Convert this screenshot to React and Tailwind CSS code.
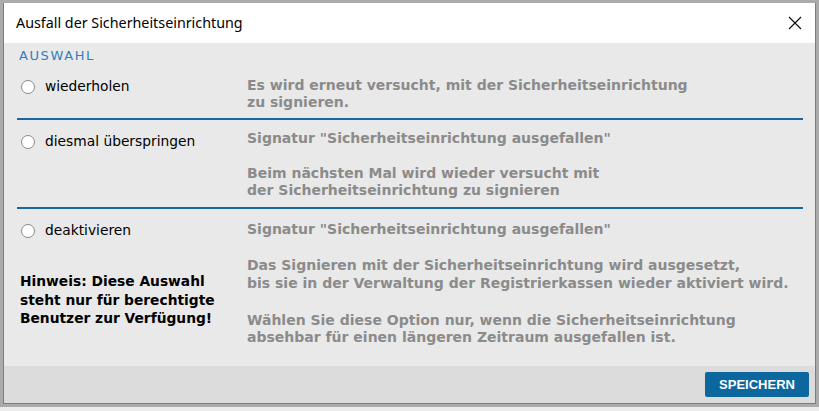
import React from "react";

const body = "text-[14px] leading-[17px] font-bold font-['DejaVu_Sans'] text-[#8b8b8b]";

function Radio() {
  return (
    <span className="inline-block w-[14px] h-[14px] rounded-full border border-[#8a8a8a] bg-white shrink-0" />
  );
}

function Label({ children, offset = "mt-[1px]" }) {
  return (
    <div className={`flex items-center gap-[10px] pl-[4px] h-[17px] ${offset}`}>
      <Radio />
      <span className="text-[13.8px] leading-[17px] text-black font-['DejaVu_Sans']">{children}</span>
    </div>
  );
}

export default function App() {
  return (
    <div className="w-[819px] h-[411px] bg-[#ececec] font-['DejaVu_Sans']">
      <div className="w-[819px] h-[407px] border-[3px] border-[#ababab]">
        <div className="w-full h-full border border-[#7c7c7c] border-t-0 flex flex-col bg-[#e9e9e9]">
          {/* Title bar */}
          <div className="h-[40px] bg-white flex items-center justify-between pl-[12px] pr-[10px] shrink-0">
            <span className="text-[14.3px] text-black font-['Noto_Sans']">
              Ausfall der Sicherheitseinrichtung
            </span>
            <svg width="14" height="14" viewBox="0 0 14 14" className="mr-[3px]">
              <path d="M1 1 L13 13 M13 1 L1 13" stroke="#111" strokeWidth="1.2" fill="none" />
            </svg>
          </div>

          {/* Body */}
          <div className="flex-1 pt-[4px] pl-[13px] pr-[12px]">
            <div className="text-[13px] leading-[17px] text-[#2f7fbe] tracking-[1.6px] pl-[2px]">AUSWAHL</div>

            {/* Section 1 */}
            <div className="flex pt-[13px] pb-[7px] border-b-2 border-[#1568a0]">
              <div className="w-[230px] shrink-0">
                <Label>wiederholen</Label>
              </div>
              <div className={body}>
                Es wird erneut versucht, mit der Sicherheitseinrichtung
                <br />
                zu signieren.
              </div>
            </div>

            {/* Section 2 */}
            <div className="flex pt-[10px] pb-[8px] border-b-2 border-[#1568a0]">
              <div className="w-[230px] shrink-0">
                <Label offset="mt-[3px]">diesmal überspringen</Label>
              </div>
              <div className={body}>
                <div>Signatur "Sicherheitseinrichtung ausgefallen"</div>
                <div className="mt-[18px]">
                  Beim nächsten Mal wird wieder versucht mit
                  <br />
                  der Sicherheitseinrichtung zu signieren
                </div>
              </div>
            </div>

            {/* Section 3 */}
            <div className="flex pt-[12px]">
              <div className="w-[230px] shrink-0">
                <Label>deaktivieren</Label>
                <div className="mt-[33px] pl-[3px] text-[13.8px] leading-[18.5px] font-bold text-black">
                  Hinweis: Diese Auswahl
                  <br />
                  steht nur für berechtigte
                  <br />
                  Benutzer zur Verfügung!
                </div>
              </div>
              <div className={body}>
                <div>Signatur "Sicherheitseinrichtung ausgefallen"</div>
                <div className="mt-[18px] leading-[18px]">
                  Das Signieren mit der Sicherheitseinrichtung wird ausgesetzt,
                  <br />
                  bis sie in der Verwaltung der Registrierkassen wieder aktiviert wird.
                </div>
                <div className="mt-[20px]">
                  Wählen Sie diese Option nur, wenn die Sicherheitseinrichtung
                  <br />
                  absehbar für einen längeren Zeitraum ausgefallen ist.
                </div>
              </div>
            </div>
          </div>

          {/* Footer */}
          <div className="h-[37px] bg-[#dcdcdc] flex items-center justify-end pr-[6px] shrink-0">
            <button className="h-[25px] w-[104px] rounded-[2px] bg-[#0b679e] text-white text-[13px] font-bold font-['Liberation_Sans']">
              SPEICHERN
            </button>
          </div>
        </div>
      </div>
    </div>
  );
}
